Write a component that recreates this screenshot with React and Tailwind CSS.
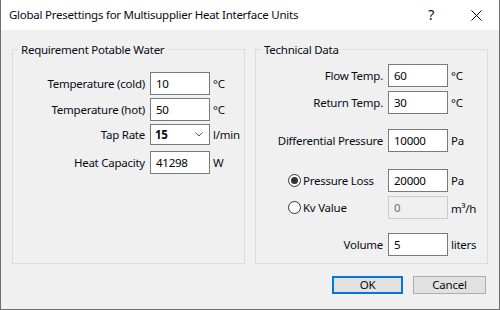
import { useState } from "react";

function Field({ value, disabled }) {
  return (
    <input
      type="text"
      readOnly
      defaultValue={value}
      disabled={disabled}
      className={
        "w-[60px] h-[23px] border pl-[5px] outline-none " +
        (disabled
          ? "border-[#cccccc] bg-[#f0f0f0] text-[#6d6d6d]"
          : "border-[#7a7a7a] bg-white text-black")
      }
    />
  );
}

function Row({ label, value, unit, labelW, className = "", disabled }) {
  return (
    <div className={"flex items-center h-[23px] " + className}>
      <div className="text-right whitespace-nowrap" style={{ width: labelW }}>{label}</div>
      <div className="ml-[5px]">
        <Field value={value} disabled={disabled} />
      </div>
      <div className="ml-[3px] whitespace-nowrap">{unit}</div>
    </div>
  );
}

function Radio({ checked, label, onClick }) {
  return (
    <div className="w-[132px] flex items-center pl-[32px] cursor-default" onClick={onClick}>
      <div className="w-[13px] h-[13px] rounded-full border border-[#333333] bg-white flex items-center justify-center">
        {checked && <div className="w-[7px] h-[7px] rounded-full bg-[#333333]" />}
      </div>
      <span className="ml-[2px]">{label}</span>
    </div>
  );
}

function Group({ title, children }) {
  return (
    <div className="relative w-[233px] h-[215px] border border-[#dcdcdc]">
      <span className="absolute -top-[8px] left-[5px] px-[3px] bg-[#f0f0f0] leading-[15px] whitespace-nowrap">
        {title}
      </span>
      {children}
    </div>
  );
}

export default function App() {
  const [mode, setMode] = useState("loss");

  return (
    <div className="w-[500px] h-[310px] flex flex-col border-x border-b border-[#6f6f6f] bg-[#f0f0f0] text-[11.5px] tracking-[-0.25px] text-[#0a0a14] font-['Noto_Sans',sans-serif]">
      {/* title bar */}
      <div className="h-[30px] bg-white flex items-center pl-[8px] shrink-0">
        <span>Global Presettings for Multisupplier Heat Interface Units</span>
        <span className="ml-auto text-[14px] leading-none">?</span>
        <svg width="11" height="11" viewBox="0 0 11 11" className="ml-[37px] mr-[17px]">
          <path d="M0.5 0.5 L10.5 10.5 M10.5 0.5 L0.5 10.5" stroke="#000" strokeWidth="1" />
        </svg>
      </div>

      {/* body */}
      <div className="flex pt-[19px] pl-[11px] gap-[10px]">
        <Group title="Requirement Potable Water">
          <div className="flex flex-col pt-[22px]">
            <Row label="Temperature (cold)" value="10" unit="°C" labelW={132} />
            <Row label="Temperature (hot)" value="50" unit="°C" labelW={132} className="mt-[3px]" />
            <div className="flex items-center h-[21px] mt-[3px]">
              <div className="w-[132px] text-right">Tap Rate</div>
              <div className="ml-[5px] w-[60px] h-[21px] border border-[#7a7a7a] bg-white flex items-center pl-[4px]">
                <span className="font-bold">15</span>
                <svg width="8" height="5" viewBox="0 0 8 5" className="ml-auto mr-[6px]">
                  <path d="M0.5 0.5 L4 4 L7.5 0.5" stroke="#555" strokeWidth="1" fill="none" />
                </svg>
              </div>
              <div className="ml-[3px]">l/min</div>
            </div>
            <Row label="Heat Capacity" value="41298" unit="W" labelW={132} className="mt-[6px]" />
          </div>
        </Group>

        <Group title="Technical Data">
          <div className="flex flex-col pt-[14px]">
            <Row label="Flow Temp." value="60" unit="°C" labelW={127} />
            <Row label="Return Temp." value="30" unit="°C" labelW={127} className="mt-[4px]" />
            <Row label="Differential Pressure" value="10000" unit="Pa" labelW={127} className="mt-[15px]" />
            <div className="flex items-center h-[23px] mt-[17px]">
              <Radio checked={mode === "loss"} label="Pressure Loss" onClick={() => setMode("loss")} />
              <Field value="20000" />
              <div className="ml-[3px]">Pa</div>
            </div>
            <div className="flex items-center h-[23px] mt-[4px]">
              <Radio checked={mode === "kv"} label="Kv Value" onClick={() => setMode("kv")} />
              <Field value="0" disabled />
              <div className="ml-[3px] mt-[3px]">m³/h</div>
            </div>
            <Row label="Volume" value="5" unit="liters" labelW={127} className="mt-[14px]" />
          </div>
        </Group>
      </div>

      {/* buttons */}
      <div className="flex justify-end gap-[10px] pr-[13px] mt-[12px]">
        <button className="w-[71px] h-[18px] border-2 border-[#0078d7] bg-[#e1e1e1] leading-none">OK</button>
        <button className="w-[73px] h-[18px] border border-[#adadad] bg-[#e1e1e1] leading-none">Cancel</button>
      </div>
    </div>
  );
}
